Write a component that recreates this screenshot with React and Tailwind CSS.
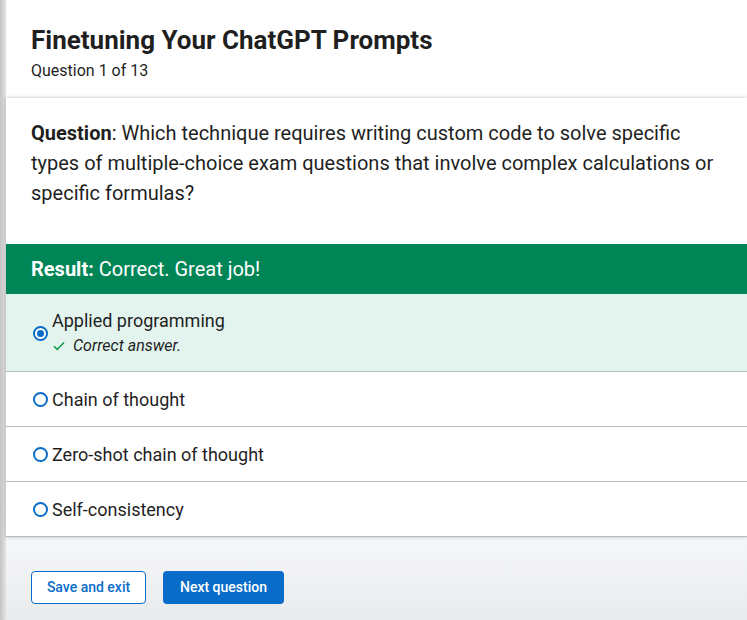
import React from "react";

function Radio({ checked }) {
  return (
    <span className="flex h-[15px] w-[15px] shrink-0 items-center justify-center rounded-full border-2 border-[#0a6cc9] bg-white">
      {checked && <span className="h-[7px] w-[7px] rounded-full bg-[#0a6cc9]" />}
    </span>
  );
}

function Option({ label }) {
  return (
    <div className="flex h-[55px] items-center gap-[4px] border-b border-[#b3bac2] bg-white pl-[27px]">
      <Radio />
      <span className="text-[18px] text-[#1f1f1f]">{label}</span>
    </div>
  );
}

export default function App() {
  return (
    <div
      className="flex h-[620px] w-[747px] overflow-hidden bg-white"
      style={{ fontFamily: "Roboto, 'Liberation Sans', sans-serif" }}
    >
      <div className="w-[6px] shrink-0 bg-gradient-to-r from-[#c4c4c4] to-[#e4e4e4]" />
      <div className="flex min-w-0 flex-1 flex-col">
        <header className="h-[98px] shrink-0 bg-white pl-[25px] pt-[23px]">
          <h1 className="text-[26px] font-bold leading-[34px] text-[#1f1f1f]">
            Finetuning Your ChatGPT Prompts
          </h1>
          <p className="mt-[3px] text-[16px] leading-[22px] text-[#1f1f1f]">Question 1 of 13</p>
        </header>
        <section className="relative z-10 shrink-0 bg-white shadow-[0_0_4px_rgba(0,0,0,0.25)]">
          <div className="pb-[36px] pl-[25px] pr-[20px] pt-[20px] text-[20px] leading-[30px] text-[#1f1f1f]">
            <span className="font-bold">Question</span>: Which technique requires writing custom code to solve specific
            types of multiple-choice exam questions that involve complex calculations or specific formulas?
          </div>
          <div className="flex h-[50px] items-center bg-[#008656] pl-[25px] text-[20px] text-white">
            <span className="font-bold">Result:</span>
            <span className="ml-[5px]">Correct. Great job!</span>
          </div>
          <div className="flex h-[78px] items-center gap-[4px] border-b border-[#b3bac2] bg-[#e3f4ee] pl-[27px] pt-[2px]">
            <Radio checked />
            <div className="flex flex-col">
              <span className="text-[18px] leading-[24px] text-[#1f1f1f]">Applied programming</span>
              <span className="flex items-center gap-[8px] pl-[1px] text-[16px] italic leading-[26px] text-[#1f1f1f]">
                <svg width="12" height="10" viewBox="0 0 12 10" fill="none">
                  <path d="M1 5.2 L4.2 8.4 L11 1.4" stroke="#0f9a4a" strokeWidth="1.5" />
                </svg>
                Correct answer.
              </span>
            </div>
          </div>
          <Option label="Chain of thought" />
          <Option label="Zero-shot chain of thought" />
          <Option label="Self-consistency" />
        </section>
        <footer className="flex flex-1 gap-[17px] bg-gradient-to-b from-[#f6f7f9] to-[#e9eaec] pl-[25px] pt-[34px]">
          <button className="h-[33px] w-[115px] rounded-[4px] border border-[#0a6cc9] bg-white text-[14px] font-medium text-[#0a6cc9]">
            Save and exit
          </button>
          <button className="h-[33px] w-[121px] rounded-[4px] bg-[#0a6cc9] text-[14px] font-medium text-white">
            Next question
          </button>
        </footer>
      </div>
    </div>
  );
}
